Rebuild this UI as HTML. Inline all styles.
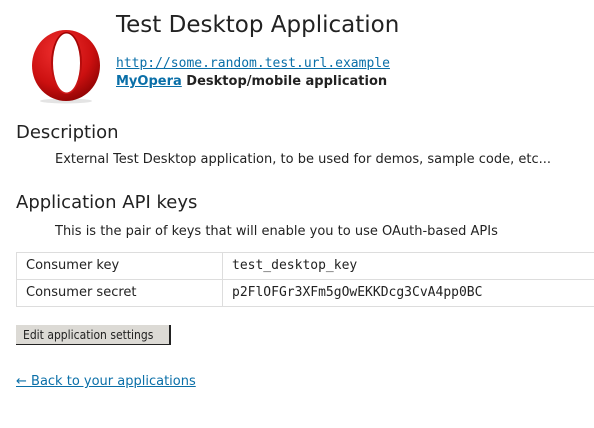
<!DOCTYPE html>
<html><head><meta charset="utf-8"><style>
body{margin:0;width:594px;height:428px;overflow:hidden;background:#fff;font-family:"DejaVu Sans","Liberation Sans",sans-serif;color:#222;position:relative}
.a{position:absolute;white-space:nowrap}
a{color:#0a6fa8;text-decoration:underline}
.mono{font-family:"DejaVu Sans Mono","Liberation Mono",monospace}
</style></head><body>
<svg class="a" style="left:20px;top:20px" width="92" height="92" viewBox="20 20 92 92">
<defs>
<radialGradient id="g" cx="0.4" cy="0.3" r="0.8"><stop offset="0" stop-color="#f03030"/><stop offset="0.6" stop-color="#cc1010"/><stop offset="1" stop-color="#800000"/></radialGradient>
<linearGradient id="h" x1="0" y1="0" x2="0" y2="1"><stop offset="0" stop-color="#9b0000"/><stop offset="1" stop-color="#d01818"/></linearGradient>
</defs>
<ellipse cx="66" cy="101" rx="26" ry="2.5" fill="#e4e4e4"/>
<ellipse cx="66" cy="65.5" rx="34" ry="35.5" fill="url(#g)"/>
<ellipse cx="66.5" cy="63" rx="15.5" ry="31" fill="url(#h)"/>
<ellipse cx="66.5" cy="63" rx="13.5" ry="29.5" fill="#fff"/>
</svg>
<div class="a" style="left:116px;top:12px;font-size:23px">Test Desktop Application</div>
<div class="a mono" style="left:116px;top:56px;font-size:13px"><a>http://some.random.test.url.example</a></div>
<div class="a" style="left:116px;top:74px;font-size:13px;font-weight:bold"><a>MyOpera</a> Desktop/mobile application</div>
<div class="a" style="left:16px;top:122px;font-size:18px">Description</div>
<div class="a" style="left:55px;top:152px;font-size:13px">External Test Desktop application, to be used for demos, sample code, etc...</div>
<div class="a" style="left:16px;top:192px;font-size:18px">Application API keys</div>
<div class="a" style="left:55px;top:224px;font-size:13px">This is the pair of keys that will enable you to use OAuth-based APIs</div>
<div class="a" style="left:16px;top:252px;width:600px;height:55px;border:1px solid #ddd;box-sizing:border-box"></div>
<div class="a" style="left:16px;top:279px;width:600px;height:1px;background:#ddd"></div>
<div class="a" style="left:222px;top:252px;width:1px;height:55px;background:#ddd"></div>
<div class="a" style="left:26px;top:258px;font-size:13px">Consumer key</div>
<div class="a mono" style="left:232px;top:258px;font-size:13px">test_desktop_key</div>
<div class="a" style="left:26px;top:285px;font-size:13px">Consumer secret</div>
<div class="a mono" style="left:232px;top:285px;font-size:13px">p2FlOFGr3XFm5gOwEKKDcg3CvA4pp0BC</div>
<div class="a" style="left:16px;top:325px;width:146px;height:19px;background:#dcdad5;border-right:2px solid #222;border-bottom:1px solid #222;font-family:'DejaVu Sans Condensed','DejaVu Sans',sans-serif;font-size:12px;line-height:20px;padding-left:7px">Edit application settings</div>
<div class="a" style="left:16px;top:374px;font-size:13px"><a>← Back to your applications</a></div>
</body></html>
